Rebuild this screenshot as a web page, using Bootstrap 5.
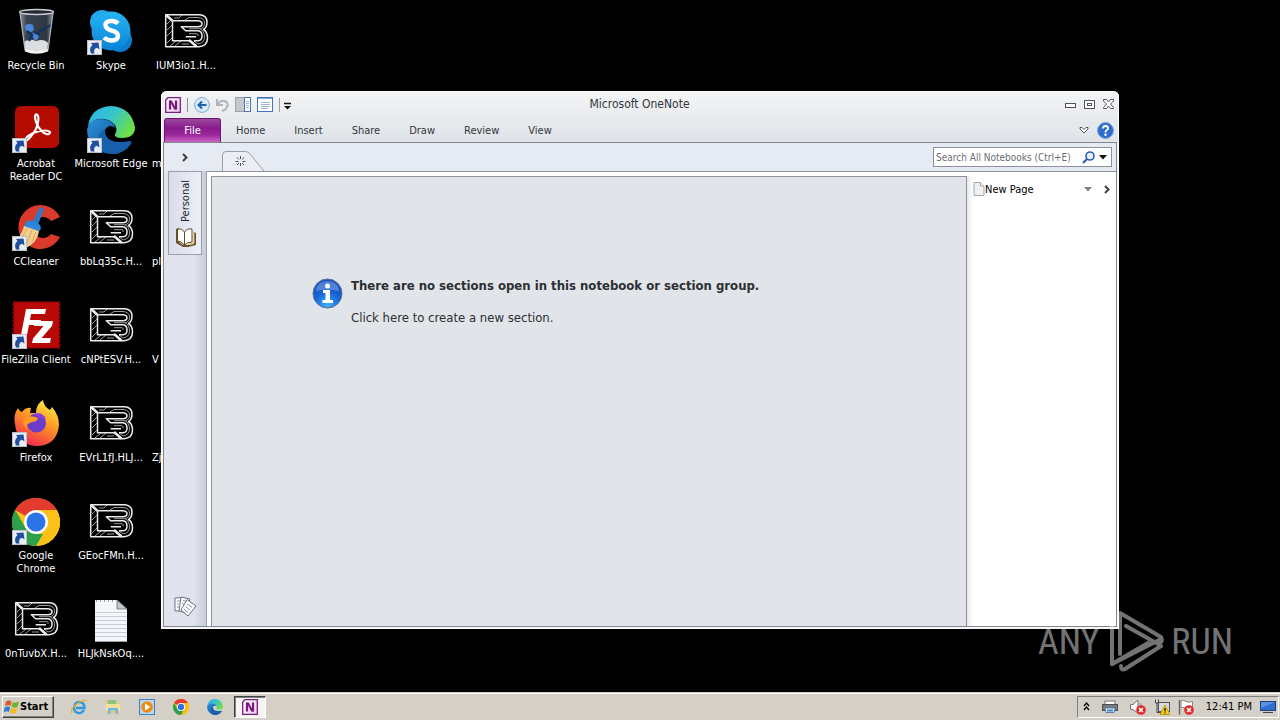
<!DOCTYPE html>
<html lang="en">

<head>
  <meta charset="UTF-8" />
  <meta name="viewport" content="width=device-width, initial-scale=1.0" />
  <title>Microsoft OneNote</title>
  <link href="https://cdn.jsdelivr.net/npm/bootstrap@5.3.0/dist/css/bootstrap.min.css" rel="stylesheet">
  <script src="https://cdn.jsdelivr.net/npm/bootstrap@5.3.0/dist/js/bootstrap.bundle.min.js"></script>
  <style>
    body {
      background-color: #000;
      font-family: Tahoma, "DejaVu Sans Condensed", "Noto Sans", sans-serif;
      font-size: 11px;
      line-height: 13px;
      color: #000;
    }
    svg {
      display: block;
      flex-shrink: 0;
    }
    button {
      border: 0;
      padding: 0;
      background: none;
      color: inherit;
    }

    /* desktop */
    .desktop {
      min-height: 0;
    }
    .icon-grid {
      display: grid;
      grid-auto-flow: column;
      grid-template-rows: repeat(7, 98px);
      grid-auto-columns: 75px;
      padding-top: 8px;
    }
    .desk-icon {
      display: flex;
      flex-direction: column;
      align-items: center;
      gap: 3px;
      padding-right: 3px;
      color: #fff;
      text-decoration: none;
      text-align: center;
      white-space: nowrap;
    }
    .desk-icon svg {
      width: 48px;
      height: 48px;
      overflow: visible;
    }
    .desk-icon.tucked {
      align-items: flex-start;
      padding-left: 2px;
    }

    /* OneNote window */
    .note-window {
      position: absolute;
      left: 161px;
      right: 161px;
      top: 91px;
      bottom: 63px;
      padding: 0 2px 2px;
      background: linear-gradient(#f3f4f5, #dfe3e8 50px, #f6f7f9 52px);
      border-radius: 6px 6px 0 0;
      box-shadow: inset 0 1px 0 #fff, inset 1px 0 0 #fff, inset -1px 0 0 #fff;
    }
    .title-row {
      height: 27px;
      padding: 0 3px 0 2px;
      font-size: 12px;
      color: #33373c;
    }
    .title-side {
      flex: 1 1 0;
    }
    .quick-tools {
      gap: 6px;
    }
    .ribbon-row {
      height: 24px;
      padding: 0 3px 0 1px;
      gap: 1px;
      color: #33373c;
    }
    .file-tab {
      width: 57px;
      color: #fff;
      border: 1px solid #6d1470;
      border-bottom: 0;
      border-radius: 3px 3px 0 0;
      background: linear-gradient(#9a4a9c, #8a1a8c 40%, #9b2a9d 70%, #cf62c8);
    }
    .ribbon-tab {
      padding: 0 14px;
    }
    .window-body {
      border: 1px solid #82878e;
      background: #e6eaf3;
    }
    .section-row {
      height: 28px;
    }
    .expand-cell {
      width: 42px;
    }
    .search-box {
      width: 179px;
      height: 20px;
      background: #fff;
      border: 1px solid #8b909c;
    }
    .search-box input {
      border: 0;
      outline: 0;
      padding: 0 0 0 2px;
      color: #5c6068;
      background: none;
      font-size: 10px;
      flex: 1 1 0;
      min-width: 0;
    }
    .search-box input::placeholder {
      color: #6b6e74;
      opacity: 1;
    }
    .notebook-bar {
      width: 42px;
      background: linear-gradient(90deg, #e1e4ed 70%, #c9cdd8);
    }
    .notebook-tab {
      width: 34px;
      height: 84px;
      border: 1px solid #9a9faa;
      background: linear-gradient(90deg, #d9dde8, #eceff6);
      color: #22252a;
      padding: 8px 0 7px;
    }
    .upright {
      writing-mode: vertical-rl;
      transform: rotate(180deg);
    }
    .paper {
      background: #fff;
      border-top: 1px solid #8c919a;
      border-left: 1px solid #9a9fa8;
      padding: 4px 0 0 4px;
    }
    .page-pane {
      background: #e1e4e8;
      border: 1px solid #8f9399;
      border-bottom: 0;
      padding: 101px 0 0 100px;
      color: #2c2f34;
      font-size: 13px;
      line-height: 16px;
    }
    .pages-list {
      width: 149px;
      padding: 6px 6px 0 6px;
      background: linear-gradient(90deg, #e9e9ee, #fff 6px);
    }

    /* taskbar */
    .taskbar {
      height: 28px;
      padding: 0 1px 0 2px;
      background: #d4d0c8;
      border-top: 1px solid #d4d0c8;
      box-shadow: inset 0 1px 0 #fff;
    }
    .start-btn {
      width: 52px;
      height: 22px;
      font-weight: bold;
      background: #d4d0c8;
      border: 1px solid;
      border-color: #fff #404040 #404040 #fff;
      box-shadow: inset -1px -1px 0 #808080;
    }
    .quick-launch {
      gap: 18px;
      padding: 0 11px 0 17px;
    }
    .task-active {
      width: 32px;
      height: 22px;
      background: #f7f5f3;
      border: 1px solid;
      border-color: #404040 #fff #fff #404040;
      box-shadow: inset 1px 1px 0 #808080;
    }
    .tray {
      height: 22px;
      padding: 0 2px 0 5px;
      border: 1px solid;
      border-color: #808080 #fff #fff #808080;
    }

    .watermark {
      position: absolute;
      right: 47px;
      bottom: 48px;
      height: 62px;
      color: #fff;
      opacity: .45;
      font-family: "Roboto Condensed", "Liberation Sans Narrow", "Liberation Sans", sans-serif;
      font-size: 36px;
      line-height: 64px;
      pointer-events: none;
    }
  </style>
</head>

<body class="d-flex flex-column vh-100 overflow-hidden">

  <!-- shared icons -->
  <svg width="0" height="0" class="position-absolute" aria-hidden="true">
    <defs>
      <linearGradient id="gPurple" x1="0" y1="0" x2="1" y2="1">
        <stop offset="0" stop-color="#fff" /><stop offset="1" stop-color="#ecc9ee" />
      </linearGradient>
      <linearGradient id="gEdgeTop" x1="0" y1="0" x2="1" y2=".5">
        <stop offset="0" stop-color="#2db3e4" /><stop offset=".5" stop-color="#35c3d2" /><stop offset="1" stop-color="#6ade4b" />
      </linearGradient>
      <linearGradient id="gEdgeLow" x1="0" y1="0" x2="1" y2="1">
        <stop offset="0" stop-color="#2a94dc" /><stop offset="1" stop-color="#114a8f" />
      </linearGradient>
      <linearGradient id="gFox" x1=".8" y1="0" x2=".3" y2="1">
        <stop offset="0" stop-color="#fff04a" /><stop offset=".45" stop-color="#ff9a22" /><stop offset="1" stop-color="#f0254f" />
      </linearGradient>
      <linearGradient id="gSkype" x1="0" y1="0" x2="0" y2="1">
        <stop offset="0" stop-color="#27b4f2" /><stop offset="1" stop-color="#0a83d8" />
      </linearGradient>
      <linearGradient id="gBin" x1="0" y1="0" x2="1" y2="0">
        <stop offset="0" stop-color="#8a9198" /><stop offset=".2" stop-color="#39434f" /><stop offset=".8" stop-color="#2e3742" /><stop offset="1" stop-color="#8a9198" />
      </linearGradient>
      <radialGradient id="gInfo" cx=".5" cy=".9" r=".9">
        <stop offset="0" stop-color="#3cb4ff" /><stop offset=".5" stop-color="#1763d6" /><stop offset="1" stop-color="#1a4fb8" />
      </radialGradient>

      <symbol id="arrow" viewBox="0 0 15 15">
        <rect x=".5" y=".5" width="14" height="14" fill="#e9edf3" stroke="#b9c0ca" />
        <path d="M4 13.500 Q1.500 8 5.500 5 L4 3 L11.500 2.500 L12.500 9.500 L10 7.800 Q6 9 7.500 13.500z" fill="#1f4f9e" />
      </symbol>

      <symbol id="htaLogo" viewBox="0 0 48 48">
        <g fill="none" stroke="#9b9b9b" stroke-width="1">
          <path d="M12 10 H17 L20 7 M23 12 L27 9.500 H36 Q42.500 10 42.500 15 Q42.500 20 38 20.700 H27 M38 20.700 Q42.500 23 42.500 29 Q42.500 35 36 36 L32 33 M5 16 L9 12 M5 22 L10 17 M5 28 L10 23 M5 35 L10 30 M8 38 L14 33 M13 38 L19 33 M20 36 H27 M27 25.700 H35 Q37 26.500 36 28" />
        </g>
        <g fill="none" stroke="#ececec" stroke-width="1.500" stroke-linejoin="round">
          <path d="M3.700 6.700 H38 Q45 7.500 45 14 Q45 19.500 41.500 21.500 Q45.500 24 45.500 30 Q45.500 38 37 38.800 H3.700z" />
          <path d="M10.500 12.700 H36 Q40 13.300 40 15.700 Q40 18.500 36 18.700 H19.300 L23.700 22.700 H36 Q40 23 40 28 Q40 32.700 36 32.700 H32 M10.500 12.700 V32.700 H28 M23.700 28.700 H34" />
          <path d="M3.700 6.700 L10.500 12.700 M27 32 L34.500 38.500" stroke-width="2.500" />
        </g>
      </symbol>

      <symbol id="chromeLogo" viewBox="0 0 48 48">
        <circle cx="24" cy="24" r="24" fill="#fbc116" />
        <path d="M24 24 L3.200 12 A24 24 0 0 1 44.800 12z" fill="#e33b2e" />
        <path d="M24 12 H44.800 A24 24 0 0 1 24 48 L34.400 30z" fill="#fbc116" />
        <path d="M3.200 12 L13.600 30 L24 36 H31 L24 48 A24 24 0 0 1 3.200 12z" fill="#2da04b" />
        <circle cx="24" cy="24" r="12" fill="#fff" />
        <circle cx="24" cy="24" r="9.500" fill="#2c72e8" />
      </symbol>

      <symbol id="edgeLogo" viewBox="0 0 48 48">
        <path d="M1 20 Q4 1 24 0 Q44 1 48 21 Q48 32 35 32 Q27 32 28 28 Q31 24 28 19 Q20 10 8 14 Q3 16 1 20z" fill="url(#gEdgeTop)" />
        <path d="M0 24 Q2 13 14 13 Q25 13 29 22 Q22 17 18 24 Q15 34 24 42 Q28 46 33 47 Q24 50 15 46 Q1 40 0 24z" fill="url(#gEdgeLow)" />
        <path d="M18 24 Q18 36 33 36 Q39 36 43 35 Q45 35 44 38 Q38 47 27 48 Q10 44 12 30 Q14 24 18 24z" fill="#1760ac" />
      </symbol>

      <symbol id="noteLogo" viewBox="0 0 16 16">
        <path d="M3 .7 H15.300 V15.300 H.7 V3z" fill="url(#gPurple)" stroke="#7c1c80" stroke-width="1.300" />
        <path d="M5 12.500 V3.500 M11 12.500 V3.500" fill="none" stroke="#7a1a7e" stroke-width="2.200" />
        <path d="M4.500 3.500 H6.800 L11.500 12.500 H9.200z" fill="#7a1a7e" />
      </symbol>

      <symbol id="denied" viewBox="0 0 10 10">
        <circle cx="5" cy="5" r="4.800" fill="#dd2a2a" />
        <path d="M3 3 L7 7 M7 3 L3 7" stroke="#fff" stroke-width="1.500" />
      </symbol>
    </defs>
  </svg>

  <main class="desktop flex-grow-1 position-relative">
    <div class="icon-grid">
      <a href="#" class="desk-icon">
        <svg viewBox="0 0 48 48">
          <path d="M8 4 L13 42 Q24 47 36 42 L41 4z" fill="url(#gBin)" />
          <path d="M12 34 Q17 30 24 33 Q32 30 36 35 L35.500 41 Q24 46 13 41z" fill="#dcdde0" />
          <path d="M13 18 Q16 14 21 17 L22 22 L18 25 L14 23z M20 25 Q25 23 27 28 Q26 33 22 32z" fill="#4a86d8" />
          <path d="M15 23 L20 27 L17 33 M26 24 L39 17 M22 24 L28 27" fill="none" stroke="#14305f" stroke-width="2.500" />
          <ellipse cx="24.500" cy="4" rx="17" ry="2.500" fill="#23282e" stroke="#c8ccd0" stroke-width="1.300" />
          <path d="M8 5 L13 42 M41 5 L36 42" stroke="#aeb4ba" stroke-width="1.200" />
          <path d="M13 42 Q24 47 36 42" fill="none" stroke="#f5f5f5" stroke-width="2.500" />
        </svg>
        <span>Recycle Bin</span>
      </a>
      <a href="#" class="desk-icon">
        <svg viewBox="0 0 48 48">
          <rect x="3" y="0" width="44" height="42" rx="6" fill="#b30b00" />
          <path d="M13 34 Q15 29 24 26 Q35 23 38 26 Q38 30 32 27 Q25 22 23 12 Q23 7 25.500 9 Q28 13 24 23 Q18 33 14 35z" fill="none" stroke="#fff" stroke-width="2.200" />
          <use href="#arrow" x="0" y="32" width="15" height="15" />
        </svg>
        <span>Acrobat<br>Reader DC</span>
      </a>
      <a href="#" class="desk-icon">
        <svg viewBox="0 0 48 48">
          <path d="M48 13 A22 22 0 1 0 48 33 L39 30 A10.500 10.500 0 1 1 39 17z" fill="#d93a2b" />
          <path d="M28 3 L32 5 L26 21 L20 19z" fill="#2d78c8" />
          <path d="M14 18 Q20 14 28 21 Q30 25 27 27 L12 23z" fill="#2a86d8" />
          <path d="M12 22 L27 27 Q26 38 14 44 Q6 43 1 37 Q9 34 12 22z" fill="#f2cf8e" />
          <path d="M15 24 L8 39 M20 26 L14 42 M24 28 L20 38" stroke="#d8a85a" />
          <use href="#arrow" x="0" y="32" width="15" height="15" />
        </svg>
        <span>CCleaner</span>
      </a>
      <a href="#" class="desk-icon">
        <svg viewBox="0 0 48 48">
          <rect x="1.500" y="0" width="46" height="46" fill="#b80808" stroke="#8c0505" stroke-width="2" stroke-dasharray="2 2" />
          <path d="M9 33 L14 7 H34 L33 12 H19 L18 18 H29 L28 23 H17 L15 33z M23 19 H41 L40 24 L29.500 36 H39 L38 41 H20 L21 36.500 L31.500 24 H22z" fill="#fff" />
          <use href="#arrow" x="0" y="32" width="15" height="15" />
        </svg>
        <span>FileZilla Client</span>
      </a>
      <a href="#" class="desk-icon">
        <svg viewBox="0 0 48 48">
          <path d="M3 24 Q1 15 6 8 Q8 12 10 12 Q14 7 19 8 L18 13 H24 Q24 4 31 0 Q32 7 38 10 Q40 7 40 7 Q47 15 47 25 Q45 46 24 46 Q5 45 3 24z" fill="url(#gFox)" />
          <circle cx="24.500" cy="23" r="9.500" fill="#6b3ccb" />
          <path d="M14 17 Q20 15 26 18 Q25 22 20 22 Q13 24 15 29 Q8 22 14 17z" fill="#ff9b1f" />
          <path d="M22 14 Q30 11 34 19 L28 18z" fill="#8a3fd8" />
          <use href="#arrow" x="0" y="32" width="15" height="15" />
        </svg>
        <span>Firefox</span>
      </a>
      <a href="#" class="desk-icon">
        <svg viewBox="0 0 48 48">
          <use href="#chromeLogo" width="48" height="48" />
          <use href="#arrow" x="0" y="32" width="15" height="15" />
        </svg>
        <span>Google<br>Chrome</span>
      </a>
      <a href="#" class="desk-icon"><svg><use href="#htaLogo" /></svg><span>0nTuvbX.H...</span></a>

      <a href="#" class="desk-icon">
        <svg viewBox="0 0 48 48">
          <circle cx="15" cy="14" r="12" fill="#1fa9ec" />
          <circle cx="33" cy="32" r="12" fill="#0a7fd2" />
          <circle cx="24" cy="23" r="19.500" fill="url(#gSkype)" />
          <path d="M31 15.500 Q28 12.500 23.500 13 Q18 13.500 18.500 17.500 Q19 21 24.500 22.500 Q31 24 31 28 Q30.500 32.500 25 32.500 Q20 32.500 17 29.500" fill="none" stroke="#fff" stroke-width="4.500" />
          <use href="#arrow" x="0" y="32" width="15" height="15" />
        </svg>
        <span>Skype</span>
      </a>
      <a href="#" class="desk-icon">
        <svg viewBox="0 0 48 48">
          <use href="#edgeLogo" width="48" height="48" />
          <use href="#arrow" x="0" y="32" width="15" height="15" />
        </svg>
        <span>Microsoft Edge</span>
      </a>
      <a href="#" class="desk-icon"><svg><use href="#htaLogo" /></svg><span>bbLq35c.H...</span></a>
      <a href="#" class="desk-icon"><svg><use href="#htaLogo" /></svg><span>cNPtESV.H...</span></a>
      <a href="#" class="desk-icon"><svg><use href="#htaLogo" /></svg><span>EVrL1fJ.HLJ...</span></a>
      <a href="#" class="desk-icon"><svg><use href="#htaLogo" /></svg><span>GEocFMn.H...</span></a>
      <a href="#" class="desk-icon">
        <svg viewBox="0 0 48 48">
          <path d="M8 4 H30 L40 13 V46 H8z" fill="#f4f6f9" />
          <path d="M30 4 V13 H40z" fill="#c3c7cd" stroke="#6b6f75" stroke-width=".8" />
          <path d="M8 16.500 H40 M8 20.500 H40 M8 24.500 H40 M8 28.500 H40 M8 32.500 H40 M8 36.500 H40 M8 40.500 H40" stroke="#c3cddc" />
          <path d="M9 5 H29" stroke="#999" stroke-width="2" stroke-dasharray="1 3" />
          <path d="M8 45.500 H40" stroke="#9ba1a9" />
        </svg>
        <span>HLJkNskOq....</span>
      </a>

      <a href="#" class="desk-icon"><svg><use href="#htaLogo" /></svg><span>IUM3io1.H...</span></a>
      <a href="#" class="desk-icon tucked"><svg><use href="#htaLogo" x="20" /></svg><span>m</span></a>
      <a href="#" class="desk-icon tucked"><svg><use href="#htaLogo" x="20" /></svg><span>pl</span></a>
      <a href="#" class="desk-icon tucked"><svg><use href="#htaLogo" x="20" /></svg><span>V</span></a>
      <a href="#" class="desk-icon tucked"><svg><use href="#htaLogo" x="20" /></svg><span>Zj</span></a>
    </div>

    <section class="note-window d-flex flex-column">
      <header class="title-row d-flex align-items-center">
        <div class="title-side quick-tools d-flex align-items-center">
          <svg width="16" height="16"><use href="#noteLogo" /></svg>
          <svg width="1" height="14"><path d="M.5 0 V14" stroke="#8a8f96" /></svg>
          <button type="button" aria-label="Back">
            <svg width="16" height="16" viewBox="0 0 16 16"><circle cx="8" cy="8" r="7.400" fill="#d8ecfb" stroke="#7fa9d4" /><path d="M12.500 8 H5 M8 4.500 L4.500 8 L8 11.500" fill="none" stroke="#1f5fae" stroke-width="2" /></svg>
          </button>
          <button type="button" aria-label="Undo">
            <svg width="13" height="14" viewBox="0 0 13 14"><path d="M1 1 V7 H7 M1.500 6.500 Q5 1.500 9 3 Q13 5 11 9 Q10 12 6 13" fill="none" stroke="#b1b4b8" stroke-width="2" /></svg>
          </button>
          <button type="button" aria-label="Dock to desktop">
            <svg width="16" height="16" viewBox="0 0 16 16"><rect x=".5" y=".5" width="15" height="14" fill="#c3c8ce" stroke="#9aa1ab" /><rect x="9.500" y=".5" width="6" height="14" fill="#fff" stroke="#4a71bb" /><path d="M11 4.500 H14 M11 6.500 H14 M11 8.500 H14 M11 10.500 H14" stroke="#9db2d6" /></svg>
          </button>
          <button type="button" aria-label="Full page view">
            <svg width="16" height="16" viewBox="0 0 16 16"><rect x=".5" y=".5" width="15" height="14" fill="#fff" stroke="#4a71bb" /><path d="M1 1.500 H15" stroke="#86a3d8" /><path d="M4 5.500 H13 M4 7.500 H13 M4 9.500 H13 M4 11.500 H11" stroke="#9db2d6" /></svg>
          </button>
          <button type="button" aria-label="Customize toolbar">
            <svg width="12" height="14" viewBox="0 0 12 14"><path d="M.5 0 V14" stroke="#9a9fa6" /><path d="M5 5.500 H12" stroke="#111" stroke-width="1.500" /><path d="M5 8 H12 L8.500 11.500z" fill="#111" /></svg>
          </button>
        </div>
        <span>Microsoft OneNote</span>
        <div class="title-side d-flex align-items-center justify-content-end gap-2">
          <button type="button" aria-label="Minimize">
            <svg width="11" height="11" viewBox="0 0 11 11"><rect x=".5" y="4.500" width="10" height="4" fill="#fff" stroke="#50545a" /></svg>
          </button>
          <button type="button" aria-label="Maximize">
            <svg width="11" height="10" viewBox="0 0 11 10"><rect x=".5" y=".5" width="10" height="8" fill="#fff" stroke="#50545a" /><rect x="3.500" y="3.500" width="4" height="2" fill="none" stroke="#50545a" /></svg>
          </button>
          <button type="button" aria-label="Close">
            <svg width="11" height="11" viewBox="0 0 11 11"><path d="M.5 .5 H3.500 L5.500 3 L7.500 .5 H10.500 V2 L7.500 5 L10.500 8.500 V9.500 H7.500 L5.500 7 L3.500 9.500 H.5 V8.500 L3.500 5 L.5 2z" fill="#fff" stroke="#50545a" /></svg>
          </button>
        </div>
      </header>

      <nav class="ribbon-row d-flex align-items-stretch">
        <button type="button" class="file-tab">File</button>
        <button type="button" class="ribbon-tab">Home</button>
        <button type="button" class="ribbon-tab">Insert</button>
        <button type="button" class="ribbon-tab">Share</button>
        <button type="button" class="ribbon-tab">Draw</button>
        <button type="button" class="ribbon-tab">Review</button>
        <button type="button" class="ribbon-tab">View</button>
        <div class="d-flex align-items-center ms-auto gap-2">
          <button type="button" aria-label="Minimize the ribbon">
            <svg width="10" height="8" viewBox="0 0 10 8"><path d="M1 1.500 L3 1.500 L5 3.500 L7 1.500 L9 1.500 V3 L5 7 L1 3z" fill="#fff" stroke="#50545a" /></svg>
          </button>
          <button type="button" aria-label="Help">
            <svg width="17" height="17" viewBox="0 0 17 17"><circle cx="8.500" cy="8.500" r="7.900" fill="#2f6dcc" stroke="#6d9be0" /><path d="M6 6.500 Q6 4 8.500 4 Q11 4 11 6.300 Q11 7.600 9.500 8.300 Q8.500 9 8.500 10.500" fill="none" stroke="#fff" stroke-width="1.800" /><circle cx="8.500" cy="12.800" r="1.200" fill="#fff" /></svg>
          </button>
        </div>
      </nav>

      <div class="window-body flex-grow-1 d-flex flex-column">
        <div class="section-row d-flex">
          <button type="button" class="expand-cell d-flex align-items-center justify-content-center" aria-label="Expand navigation bar">
            <svg width="6" height="9" viewBox="0 0 6 9"><path d="M1 1 L4.500 4.500 L1 8" fill="none" stroke="#3d4147" stroke-width="2" /></svg>
          </button>
          <button type="button" class="align-self-end ms-3" aria-label="Create a new section">
            <svg width="43" height="20" viewBox="0 0 43 20">
              <path d="M.5 20 V4 Q.5 .5 4 .5 H23 Q26 .5 28 3 L42 20" fill="#eceef3" stroke="#9a9fa8" />
              <path d="M18.500 5 V8 M18.500 12 V15 M13.500 10.500 H16.500 M20.500 10.500 H23.500 M15 6.500 L17 8.500 M22 6.500 L20 8.500 M15 14 L17 12 M22 14 L20 12" stroke="#4d5157" />
            </svg>
          </button>
          <div class="search-box d-flex align-items-center ms-auto mt-1 me-1 pe-1 gap-1">
            <input type="text" aria-label="Search All Notebooks" placeholder="Search All Notebooks (Ctrl+E)">
            <svg width="13" height="13" viewBox="0 0 13 13"><circle cx="8" cy="5" r="4" fill="#e9f2fc" stroke="#2a5db0" stroke-width="1.600" /><path d="M5 8 L1 12" stroke="#2a5db0" stroke-width="2.200" /></svg>
            <svg width="8" height="5" viewBox="0 0 8 5"><path d="M0 0 H8 L4 4.500z" fill="#111" /></svg>
          </div>
        </div>

        <div class="flex-grow-1 d-flex">
          <aside class="notebook-bar d-flex flex-column align-items-center justify-content-between pb-2">
            <button type="button" class="notebook-tab d-flex flex-column align-items-center justify-content-between">
              <span class="upright">Personal</span>
              <svg width="21" height="20" viewBox="0 0 21 20">
                <path d="M1 2 L4 1 V15 L8 18 H14 L19 17 V5 L21 6 V18 L13 20 H8 L1 16z" fill="#6d5322" />
                <path d="M2.500 2 Q7 1 9.500 5 V18 Q6 14 2.500 14z M9.500 5 Q12 1 17 2 V15 Q12 15 9.500 18z" fill="#fff" stroke="#5e4a28" />
                <path d="M17.500 5 H19 V16 L13 17.500" fill="none" stroke="#dcb663" />
              </svg>
            </button>
            <button type="button" aria-label="Unfiled notes">
              <svg width="23" height="23" viewBox="0 0 23 23">
                <g fill="#fff" stroke="#66738a">
                  <path d="M1 3 L10 2.500 V16 H1z" />
                  <path d="M7 2 L16 4 L12 18 L5 16z" />
                  <path d="M13 4.500 L22 11 L14 21 L7 15z" />
                </g>
                <path d="M3 6 H6 M3 9 H5 M3 12 H5 M9 5.500 L13 6.500 M8 8.500 L11 9.500 M13 9 L18 12.500 M11.500 11.500 L16 15 M10 14 L14 17.500" stroke="#8995a8" />
              </svg>
            </button>
          </aside>

          <div class="paper flex-grow-1 d-flex">
            <div class="page-pane flex-grow-1">
              <div class="d-flex gap-2">
                <svg width="31" height="31" viewBox="0 0 31 31">
                  <circle cx="15.500" cy="15.500" r="14.500" fill="url(#gInfo)" stroke="#5a6f98" />
                  <path d="M4 13 Q5 3 15.500 3 Q26 3 27 13 Q15 10 4 13z" fill="#fff" opacity=".25" />
                  <circle cx="15.500" cy="8" r="2.500" fill="#fff" />
                  <path d="M11 12 H18 V22 H21 V25 H10.500 V22 H13.500 V15 H11z" fill="#fff" />
                </svg>
                <div>
                  <div class="fw-bold mb-3">There are no sections open in this notebook or section group.</div>
                  <div>Click here to create a new section.</div>
                </div>
              </div>
            </div>
            <div class="pages-list">
              <div class="d-flex align-items-center">
                <button type="button" class="d-flex align-items-center">
                  <svg width="12" height="14" viewBox="0 0 12 14"><path d="M1 .5 H7.500 L11 4 V13.500 H1z" fill="#f0f1f3" stroke="#a5a8ae" /><path d="M7.500 .5 V4 H11" fill="#fff" stroke="#a5a8ae" /></svg>
                  <span>New Page</span>
                </button>
                <svg class="ms-auto me-2" width="8" height="5" viewBox="0 0 8 5"><path d="M0 0 H8 L4 4.500z" fill="#7c8087" /></svg>
                <svg class="ms-1" width="6" height="9" viewBox="0 0 6 9"><path d="M1 1 L4.500 4.500 L1 8" fill="none" stroke="#3d4147" stroke-width="2" /></svg>
              </div>
            </div>
          </div>
        </div>
      </div>
    </section>
  </main>

  <footer class="taskbar flex-shrink-0 d-flex align-items-center">
    <button type="button" class="start-btn d-flex align-items-center">
      <svg width="17" height="16" viewBox="0 0 17 16">
        <path d="M3 2.500 Q6 .5 8.500 2.500 L7.500 7 Q5 5.500 2 7.500z" fill="#e2562b" />
        <path d="M9.500 3 Q12 4.500 16 2.500 L14.500 8 Q11 9.500 8.500 7.500z" fill="#6fb52c" />
        <path d="M1.700 8.500 Q5 6.500 7.200 8.200 L6 13 Q3.500 11.500 .5 13.500z" fill="#2d7fd8" />
        <path d="M8.200 8.700 Q11 10.500 14.200 9 L13 14 Q10 15.500 7 13.500z" fill="#f5bb1e" />
      </svg>
      <span>Start</span>
    </button>
    <div class="quick-launch d-flex align-items-center">
      <svg width="16" height="16" viewBox="0 0 16 16"><path d="M13 11 Q11 14.500 7.500 14 Q3 13.500 3 8.500 Q3.500 3 8.500 3 Q13.500 3.500 13.500 9 H5" fill="none" stroke="#2a9be0" stroke-width="2.300" /><path d="M1 14 Q-1 10 6 5 Q13 0 15.500 2" fill="none" stroke="#e5b12c" stroke-width="1.300" /></svg>
      <svg width="16" height="16" viewBox="0 0 16 16"><path d="M1 2 H6 L7 3.500 H14 V14 H1z" fill="#e9c865" /><rect x="3" y="1" width="8" height="4" fill="#8fc27c" /><path d="M1 5 H15 V12 H1z" fill="#f7e09a" /><path d="M3 15 V9 H13 V15 H10.500 V11.500 H5.500 V15z" fill="#72b6e2" /></svg>
      <svg width="16" height="16" viewBox="0 0 16 16"><rect x=".5" y=".5" width="15" height="15" fill="#b9d7ee" stroke="#3c84bd" /><circle cx="8" cy="8" r="5.800" fill="#f08a16" /><path d="M6 4.500 L11.500 8 L6 11.500z" fill="#fff" /></svg>
      <svg width="16" height="16"><use href="#chromeLogo" /></svg>
      <svg width="16" height="16"><use href="#edgeLogo" /></svg>
    </div>
    <button type="button" class="task-active d-flex align-items-center justify-content-center" aria-label="Microsoft OneNote">
      <svg width="16" height="16"><use href="#noteLogo" /></svg>
    </button>
    <div class="tray d-flex align-items-center ms-auto gap-2">
      <svg width="7" height="9" viewBox="0 0 7 9"><path d="M1 4 L3.500 1 L6 4 M1 8 L3.500 5 L6 8" fill="none" stroke="#000" stroke-width="1.300" /></svg>
      <svg class="ms-1 me-1" width="16" height="14" viewBox="0 0 16 14"><rect x="3" y="1" width="10" height="4" fill="#fff" stroke="#777" /><rect x=".5" y="4.500" width="15" height="6" fill="#777b80" stroke="#4b4e52" /><path d="M3 8 H13 L12 12.500 H4z" fill="#eef4fb" stroke="#5d7ea8" /><path d="M5 10.500 H11" stroke="#3b84d8" stroke-width="2" /></svg>
      <svg width="16" height="16" viewBox="0 0 16 16"><path d="M.5 5.500 H3 L8 1 V14 L3 10.500 H.5z" fill="#fafafa" stroke="#777" /><path d="M10 4 Q12 6 11 9" fill="none" stroke="#888" /><use href="#denied" x="6" y="6" width="10" height="10" /></svg>
      <svg width="16" height="16" viewBox="0 0 16 16"><rect x="4.500" y="3.500" width="11" height="9" fill="#d6dade" stroke="#555" /><path d="M1.500 .5 V4 H4.500 V.5 M3 4 V13.500 H8" fill="none" stroke="#444" /><path d="M11 6 L15.800 15.500 H6z" fill="#f7d21c" stroke="#b48f08" stroke-width=".8" /><path d="M11 9 V12.500 M11 13.500 V14.500" stroke="#111" stroke-width="1.300" /></svg>
      <svg width="16" height="16" viewBox="0 0 16 16"><path d="M1.500 1 V15.500" stroke="#666" stroke-width="1.500" /><path d="M3 1.500 Q6 1 8 2.500 Q11 4 14.500 2.500 V9.500 Q11 11 8 9.500 Q6 8 3 8.500z" fill="#fff" stroke="#888" /><use href="#denied" x="6" y="6" width="10" height="10" /></svg>
      <time class="ms-1">12:41 PM</time>
      <svg width="16" height="14" viewBox="0 0 16 14"><rect x=".5" y="1.500" width="15" height="9" fill="#2f6fd0" stroke="#1c3f7d" /><path d="M1 2 H15 L1 8z" fill="#79aaf0" opacity=".6" /><path d="M3 12.500 H13" stroke="#3c4654" /></svg>
    </div>
  </footer>

  <div class="watermark d-flex">
    <span>ANY</span>
    <svg width="72" height="62" viewBox="0 0 72 62">
      <g fill="none" stroke="#fff" stroke-width="4" stroke-linejoin="round" stroke-linecap="round">
        <path d="M21 44 V3 L62 27 Q65 32 59 34 L27 16" />
        <path d="M13 10 V54 L62 29" />
        <path d="M13 54 L49 33 M22 56 Q22 61 26 59 L62 36" />
      </g>
    </svg>
    <span>RUN</span>
  </div>
</body>

</html>
